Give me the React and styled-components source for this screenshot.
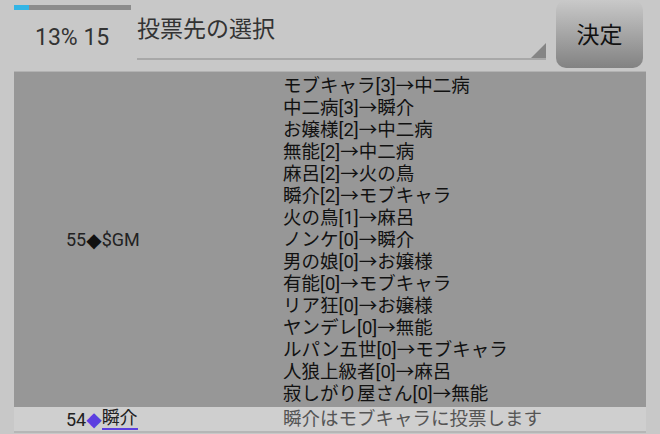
import React from "react";
import styled, { createGlobalStyle } from "styled-components";

const GlobalStyle = createGlobalStyle`
  html, body {
    margin: 0;
    padding: 0;
    background: #c8c8c8;
  }
  body {
    font-family: Roboto, "Noto Sans CJK JP", sans-serif;
  }
`;

const Page = styled.div`
  width: 660px;
  height: 434px;
  overflow: hidden;
  background: #c8c8c8;
`;

const Header = styled.div`
  display: flex;
  height: 71px;
`;

const Status = styled.div`
  width: 137px;
  display: flex;
  flex-direction: column;
`;

const Progress = styled.div`
  margin: 5px 0 0 14px;
  width: 117px;
  height: 5px;
  background: #8c8c8c;
`;

const ProgressFill = styled.div`
  height: 100%;
  background: #33b5e5;
`;

const StatusText = styled.div`
  margin: 12px 0 0 35px;
  font-size: 23px;
  color: #333;
  line-height: 32px;
`;

const Select = styled.div`
  position: relative;
  width: 409px;
  height: 60px;
  border-bottom: 2px solid #a8a8a8;
  box-sizing: border-box;
  font-size: 23px;
  color: #333;
  line-height: 32px;
  padding-top: 14px;
`;

const Arrow = styled.div`
  position: absolute;
  right: 0;
  bottom: 0;
  width: 0;
  height: 0;
  border-left: 15px solid transparent;
  border-bottom: 15px solid #858585;
`;

const Button = styled.div`
  margin-left: 10px;
  width: 87px;
  height: 68px;
  border-radius: 10px;
  background: linear-gradient(#c9c9c9, #828282);
  display: flex;
  align-items: center;
  justify-content: center;
  padding-bottom: 2px;
  box-sizing: border-box;
  font-size: 23px;
  color: #111;
`;

const Table = styled.div`
  margin-left: 14px;
  width: 632px;
  border-top: 1px solid #b2b2b2;
  border-bottom: 2px solid #b6b6b6;
`;

const Row = styled.div`
  display: grid;
  grid-template-columns: 269px 1fr;
  background: ${(p) => (p.$light ? "#cfcfcf" : "#979797")};
  color: ${(p) => (p.$light ? "#555" : "#111")};
  font-size: 18.5px;
`;

const Who = styled.div`
  display: flex;
  align-items: center;
  padding-left: 52px;
  color: #222;
  font-size: 18px;
  white-space: nowrap;
`;

const Diamond = styled.span`
  color: ${(p) => p.$color || "#111"};
  font-size: 20px;
  line-height: 20px;
  font-family: "DejaVu Sans", sans-serif;
`;

const Name = styled.span`
  border-bottom: ${(p) => (p.$link ? "2px solid #5b3fe0" : "none")};
  line-height: 20px;
`;

const Lines = styled.div`
  padding: ${(p) => (p.$light ? "1px 0 0" : "3px 0 2px")};
  line-height: ${(p) => (p.$light ? "23px" : "22px")};
`;

const votes = [
  "モブキャラ[3]→中二病",
  "中二病[3]→瞬介",
  "お嬢様[2]→中二病",
  "無能[2]→中二病",
  "麻呂[2]→火の鳥",
  "瞬介[2]→モブキャラ",
  "火の鳥[1]→麻呂",
  "ノンケ[0]→瞬介",
  "男の娘[0]→お嬢様",
  "有能[0]→モブキャラ",
  "リア狂[0]→お嬢様",
  "ヤンデレ[0]→無能",
  "ルパン五世[0]→モブキャラ",
  "人狼上級者[0]→麻呂",
  "寂しがり屋さん[0]→無能",
];

export default function App() {
  return (
    <Page>
      <GlobalStyle />
      <Header>
        <Status>
          <Progress>
            <ProgressFill style={{ width: "13%" }} />
          </Progress>
          <StatusText>13% 15</StatusText>
        </Status>
        <Select>
          投票先の選択
          <Arrow />
        </Select>
        <Button>決定</Button>
      </Header>
      <Table>
        <Row>
          <Who>
            55<Diamond>◆</Diamond>$GM
          </Who>
          <Lines>
            {votes.map((v) => (
              <div key={v}>{v}</div>
            ))}
          </Lines>
        </Row>
        <Row $light>
          <Who>
            54<Diamond $color="#5b3fe0">◆</Diamond>
            <Name $link>瞬介</Name>
          </Who>
          <Lines $light>瞬介はモブキャラに投票します</Lines>
        </Row>
      </Table>
    </Page>
  );
}
